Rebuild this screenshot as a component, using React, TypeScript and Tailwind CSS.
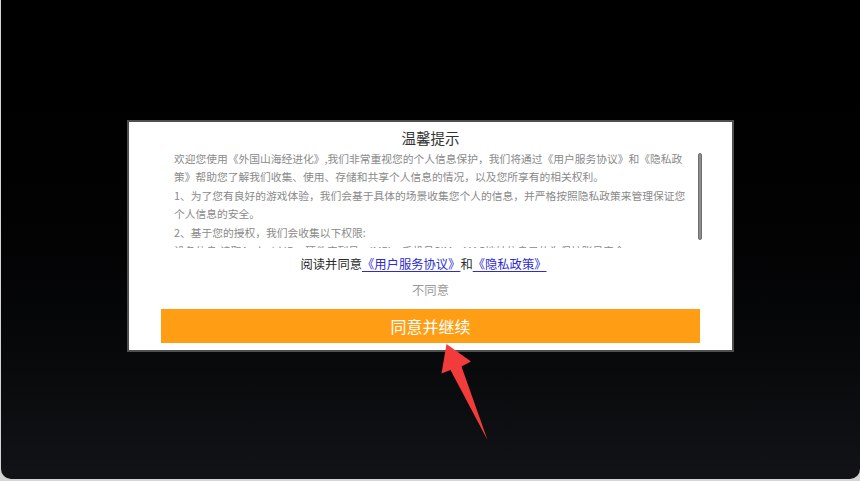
import React from 'react';

const cjk = { fontFamily: '"Noto Sans CJK SC", "Noto Sans", sans-serif' };

const paragraphs = [
  '欢迎您使用《外国山海经进化》,我们非常重视您的个人信息保护，我们将通过《用户服务协议》和《隐私政策》帮助您了解我们收集、使用、存储和共享个人信息的情况，以及您所享有的相关权利。',
  '1、为了您有良好的游戏体验，我们会基于具体的场景收集您个人的信息，并严格按照隐私政策来管理保证您个人信息的安全。',
  '2、基于您的授权，我们会收集以下权限:',
  '设备信息:读取Android ID、硬件序列号、IMEI、手机号SIM、MAC地址信息目的为保护账号安全。',
];

function Arrow() {
  // red annotation arrow pointing at the button
  return (
    <svg className="pointer-events-none absolute left-0 top-0" width="860" height="481" viewBox="0 0 860 481">
      <polygon
        points="446.5,344 441.5,373.5 450.5,370 487.5,440 461.5,366.5 471,361.5"
        fill="#f23b3b"
      />
    </svg>
  );
}

function PrivacyDialog() {
  return (
    <div className="relative flex w-[607px] h-[232px] flex-col border-2 border-[#4f4f4f] bg-white px-8 pb-[7px]" style={cjk}>
      <h2 className="mt-[5.5px] h-[20px] text-center text-[14.5px] leading-[20px] text-[#333]">温馨提示</h2>
      <div className="mt-[2.5px] ml-[13px] h-[98px] w-[513px] overflow-hidden text-[10.75px] leading-[18.4px] text-[#8a8a8a]">
        {paragraphs.map((p, i) => (
          <p key={i}>{p}</p>
        ))}
      </div>
      <div className="absolute left-[569px] top-[31px] h-[87px] w-[4px] rounded-full border border-[#6e6e6e] bg-[#8f8f8f]" />
      <p className="mt-[7px] h-[18px] pr-[14px] text-center text-[12.3px] leading-[18px] text-[#2a2a2a]">
        阅读并同意
        <a href="#" className="text-[#2d2dcf] underline underline-offset-2">《用户服务协议》</a>
        和
        <a href="#" className="text-[#2d2dcf] underline underline-offset-2">《隐私政策》</a>
      </p>
      <button className="mt-[8px] h-[18px] text-center text-[12.3px] leading-[18px] text-[#9a9a9a]">不同意</button>
      <button className="mt-[10.5px] h-[34px] w-full bg-[#ff9e15] text-[16px] text-white">同意并继续</button>
    </div>
  );
}

export default function App() {
  return (
    <div className="relative h-[481px] w-[860px] overflow-hidden bg-[#d4d4d4]">
      <div className="ml-[1px] flex h-[479px] w-[859px] justify-center rounded-b-[10px] bg-gradient-to-b from-black to-[#111316] pt-[120px]">
        <PrivacyDialog />
      </div>
      <Arrow />
    </div>
  );
}
